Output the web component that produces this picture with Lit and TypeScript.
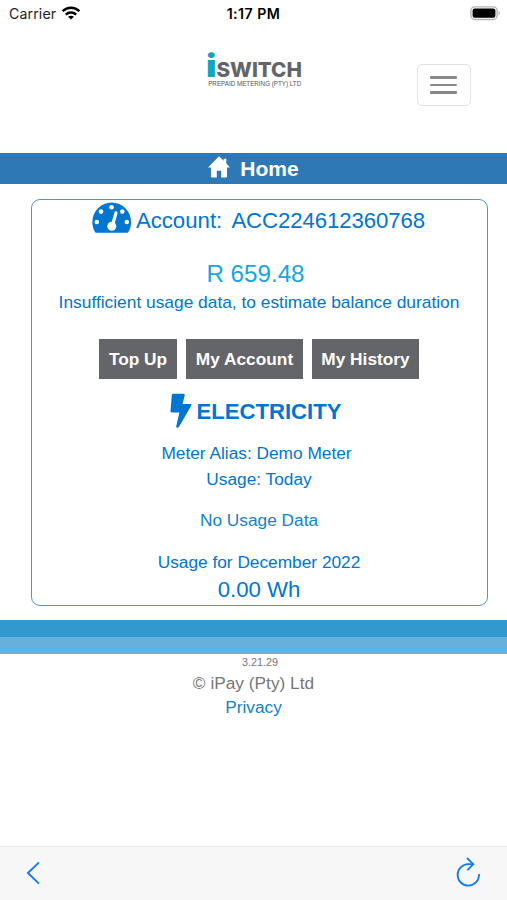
import { LitElement, html, css, svg } from "lit";
import { customElement, property } from "lit/decorators.js";

const glyphs = {
  wifi: { w: 20, h: 14, box: "0 0 20 14", body: svg`<g fill="none" stroke="#000" stroke-width="2.5"><path d="M1.6 5.2C6.4.6 13.6.6 18.4 5.2"/><path d="M4.8 8.6C7.8 5.8 12.2 5.8 15.2 8.6"/></g><path d="M10 13.6L7.1 10.8C8.8 9.3 11.2 9.3 12.9 10.8Z"/>` },
  battery: { w: 31, h: 15, box: "0 0 31 15", body: svg`<rect x=".9" y=".9" width="26.2" height="12.6" rx="4" fill="#fff" stroke="#b5b5b5" stroke-width="1.4"/><rect x="2.6" y="2.6" width="22.8" height="9.2" rx="2" fill="#000"/><path d="M28.6 4.8Q31 7.2 28.6 9.6Z" fill="#aaa"/>` },
  home: { w: 22, h: 22, box: "0 0 22 22", body: svg`<path fill="#fff" d="M11 0.2L15.6 4.8V2.8H18.3V7.5L22 11.4H19V20.5Q19 21.5 18 21.5H13.2V14.8H8.8V21.5H4Q3 21.5 3 20.5V11.4H0Z"/>` },
  gauge: { w: 40, h: 31, box: "0 0 40 31", body: svg`<path fill="#0076d1" d="M3.6 30.7C1.4 27.8.3 24 .3 20.2A19.4 19.8 0 0 1 39.1 20.2C39.1 24 38 27.8 35.8 30.7Z"/><g fill="#fff"><circle cx="19.6" cy="5.2" r="2.3"/><circle cx="9" cy="9.6" r="2.3"/><circle cx="4.8" cy="20" r="2.3"/><circle cx="30.3" cy="9.6" r="2.3"/><circle cx="34.8" cy="20" r="2.3"/><circle cx="19.8" cy="24.3" r="4.5"/></g><path d="M20.6 23L24 10.8" stroke="#fff" stroke-width="3.2" stroke-linecap="round"/>` },
  bolt: { w: 22, h: 36, box: "0 0 22 36", body: svg`<path fill="#0076d1" d="M3.2.8H13.6Q15 .8 14.7 2.2L12.6 11H20.3Q22.2 11 21.2 12.8L9 33.8Q8.2 35.1 6.9 34.6 6 34.2 6.3 33L9.4 19.5H1.7Q.3 19.5.5 18L1.8 2Q2 .8 3.2.8Z"/>` },
  back: { w: 14, h: 24, box: "0 0 14 24", body: svg`<path d="M13 1.4L1.9 12 13 22.6" fill="none" stroke="#127bf0" stroke-width="1.9"/>` },
  reload: { w: 26, h: 30, box: "0 0 26 30", body: svg`<g fill="none" stroke="#127bf0" stroke-width="1.8"><path d="M18 7.2H13.2A10.7 10.7 0 1 0 24 17.9V17"/><path d="M12 1L18.3 7.2 12.4 13.2"/></g>` },
};

@customElement("line-glyph")
class LineGlyph extends LitElement {
  @property() name: keyof typeof glyphs = "home";
  static styles = css`
    :host { display: inline-flex; flex: none; }
    svg { display: block; }
  `;
  render() {
    const g = glyphs[this.name];
    return html`<svg width=${g.w} height=${g.h} viewBox=${g.box}>${g.body}</svg>`;
  }
}

@customElement("app-root")
class AppRoot extends LitElement {
  static styles = css`
    :host {
      display: flex; flex-direction: column; box-sizing: border-box; height: 900px;
      background: #fff; color: #0076d1; overflow: hidden;
      font: 17.3px/26px "Liberation Sans", Arial, sans-serif; text-align: center;
    }
    * { box-sizing: border-box; }
    .status { display: grid; grid-template-columns: 1fr auto 1fr; align-items: center; height: 28px; padding: 0 6px 0 9px; font: 14.2px/28px Inter, sans-serif; color: #222; }
    .carrier { display: flex; align-items: center; gap: 5px; letter-spacing: .1px; }
    .carrier line-glyph { margin-top: -2px; }
    .time { font-weight: 600; color: #000; letter-spacing: .45px; margin-right: 3px; }
    .battery { justify-self: end; display: flex; margin-top: -2px; }
    .header { display: grid; grid-template-columns: 1fr 100px 1fr; height: 124.5px; }
    .logo { grid-column: 2; margin: 12px 0 0 3px; display: block; }
    .menu { justify-self: end; margin: 36px 36.5px 0 0; width: 54px; height: 42px; border: 1.5px solid #e2e2e2; border-radius: 5px; background: #fff; padding: 0; display: flex; flex-direction: column; gap: 5px; align-items: center; justify-content: center; }
    .menu i { display: block; width: 27px; height: 2.4px; border-radius: 1px; background: #888; }
    .title { display: flex; align-items: center; justify-content: center; gap: 10px; height: 31px; background: #2e79b5; color: #fff; font-weight: bold; font-size: 21px; padding-top: 1px; }
    .title line-glyph { margin-top: -4px; }
    .card { width: 457px; height: 407px; margin: 15.5px 0 0 30.5px; border: 1.5px solid #5795c5; border-radius: 9px; }
    .account { display: flex; justify-content: center; gap: 4px; height: 42px; padding: 2px 1px 0 0; font-size: 22.2px; line-height: 38px; }
    .number { margin-left: 3px; letter-spacing: -.08px; }
    .balance { color: #19a5df; font-size: 24.2px; line-height: 32px; margin-top: 16px; padding-right: 7px; }
    .note { line-height: 26px; font-size: 17.35px; margin-top: -1px; }
    .actions { display: flex; justify-content: center; gap: 9px; margin: 23.5px 0 0; }
    .actions button { border: 0; margin: 0; padding: 0; height: 40px; background: #646569; color: #fff; font: bold 17.3px/40px "Liberation Sans", Arial, sans-serif; }
    .b1 { width: 78px; } .b2 { width: 117px; } .b3 { width: 107px; }
    .service { display: flex; justify-content: center; gap: 5px; padding-right: 7px; height: 36px; margin-top: 14px; font-weight: bold; font-size: 22.1px; line-height: 37px; }
    .meter { margin-top: 11px; padding-right: 5px; }
    .empty { margin-top: 15.5px; color: #1483c9; }
    .month { margin-top: 15.5px; }
    .total { font-size: 22.2px; line-height: 29px; }
    .dark { flex: none; height: 17px; margin-top: 13.5px; background: #3099cd; }
    .light { flex: none; height: 17px; background: #66b1db; }
    .footer { flex: 1; color: #777; line-height: 24.5px; }
    .version { font-size: 10.8px; line-height: 17px; padding-left: 13px; }
    .privacy { color: #1483c9; }
    .bar { flex: none; display: flex; justify-content: space-between; height: 54.5px; background: #f7f7f7; border-top: 1.5px solid #e7e7e8; padding: 14.5px 26px 0; }
    .bar .reload { margin-top: -4px; }
  `;
  render() {
    return html`
      <div class="status">
        <span class="carrier">Carrier <line-glyph name="wifi"></line-glyph></span>
        <span class="time">1:17 PM</span>
        <line-glyph class="battery" name="battery"></line-glyph>
      </div>
      <div class="header">
        <svg class="logo" width="98" height="52" viewBox="0 -10 98 52">
          <text x="-.9" y="27" font-family="Inter" font-weight="900" font-size="31.5" fill="#12a5bd" textLength="10.5" lengthAdjust="spacingAndGlyphs">i</text>
          <text x="9.4" y="27.2" font-family="Inter" font-weight="800" font-size="20.5" fill="#646569" textLength="85.5" lengthAdjust="spacingAndGlyphs">SWITCH</text>
          <text x="1.2" y="36.3" font-family="Liberation Sans" font-size="7.9" fill="#555" textLength="93" lengthAdjust="spacingAndGlyphs">PREPAID METERING (PTY) LTD</text>
        </svg>
        <button class="menu" aria-label="Menu"><i></i><i></i><i></i></button>
      </div>
      <div class="title"><line-glyph name="home"></line-glyph><span>Home</span></div>
      <div class="card">
        <div class="account"><line-glyph name="gauge"></line-glyph><span>Account: <span class="number">ACC224612360768</span></span></div>
        <div class="balance">R 659.48</div>
        <div class="note">Insufficient usage data, to estimate balance duration</div>
        <div class="actions"><button class="b1">Top Up</button><button class="b2">My Account</button><button class="b3">My History</button></div>
        <div class="service"><line-glyph name="bolt"></line-glyph><span>ELECTRICITY</span></div>
        <div class="meter">Meter Alias: Demo Meter</div>
        <div>Usage: Today</div>
        <div class="empty">No Usage Data</div>
        <div class="month">Usage for December 2022</div>
        <div class="total">0.00 Wh</div>
      </div>
      <div class="dark"></div>
      <div class="light"></div>
      <div class="footer">
        <div class="version">3.21.29</div>
        <div>© iPay (Pty) Ltd</div>
        <div class="privacy">Privacy</div>
      </div>
      <div class="bar"><line-glyph name="back"></line-glyph><line-glyph class="reload" name="reload"></line-glyph></div>
    `;
  }
}
